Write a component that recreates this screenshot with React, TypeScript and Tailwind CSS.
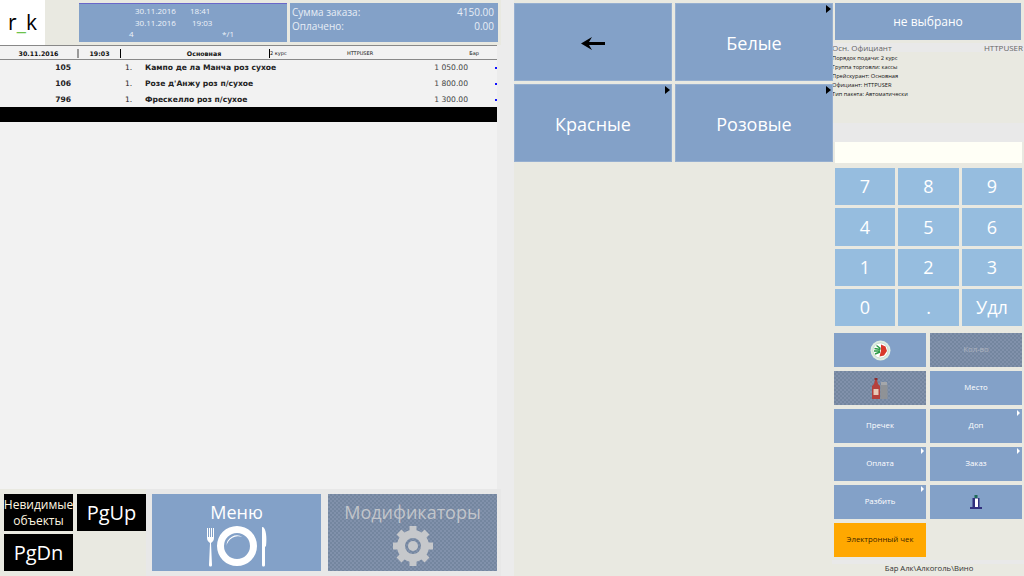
import type { ReactNode } from "react";

const SANS = "font-['Open_Sans','Noto_Sans',sans-serif]";
const TAHOMA = "font-['DejaVu_Sans',sans-serif]";
const CHECKER =
  "bg-[#7a8ca8] bg-[repeating-conic-gradient(#74869f_0_25%,#8191ab_0_50%)] bg-[length:4px_4px]";

const ORDER_ROWS = [
  { code: "105", qty: "1.", name: "Кампо де ла Манча роз сухое", price: "1 050.00" },
  { code: "106", qty: "1.", name: "Розе д'Анжу роз п/сухое", price: "1 800.00" },
  { code: "796", qty: "1.", name: "Фрескелло роз п/сухое", price: "1 300.00" },
];

const INFO_LINES = [
  "Порядок подачи: 2 курс",
  "Группа торговли: кассы",
  "Прейскурант: Основная",
  "Официант: HTTPUSER",
  "Тип пакета: Автоматически",
];

const KEYS = ["7", "8", "9", "4", "5", "6", "1", "2", "3", "0", ".", "Удл"];

function CategoryButton({ children, arrow }: { children: ReactNode; arrow?: boolean }) {
  return (
    <div className="relative flex items-center justify-center border border-[#96afd0] bg-[#83a1c8] pt-[2px] text-[18px] text-white">
      {children}
      {arrow && (
        <span className="absolute top-[1px] right-[1px] h-0 w-0 border-y-[4px] border-l-[5px] border-y-transparent border-l-black" />
      )}
    </div>
  );
}

function ActionButton({ children, arrow, className }: { children?: ReactNode; arrow?: boolean; className?: string }) {
  return (
    <div
      className={`relative flex items-center justify-center text-[7.8px] ${
        className ?? "bg-[#83a1c8] text-white"
      }`}
    >
      {children}
      {arrow && (
        <span className="absolute top-[1px] right-[2px] h-0 w-0 border-y-[3px] border-l-[3px] border-y-transparent border-l-white" />
      )}
    </div>
  );
}

function PlateIcon() {
  return (
    <svg width="62" height="42" viewBox="0 0 62 42" fill="white">
      <path d="M1 3v10c0 3 2 4 3 5l-1 22c0 2 3 2 3 0L5 18c1-1 3-2 3-5V3H7v9H6V3H5v9H4V3H3v9H2V3z" />
      <path d="M31 1a20 20 0 1 0 0 40a20 20 0 0 0 0-40zm0 7a13 13 0 1 1 0 26a13 13 0 0 1 0-26z" fillRule="evenodd" />
      <path d="M20.5 21a10.5 10.5 0 0 1 16-9 12 12 0 0 0-16 9z" />
      <path d="M57 2c3 2 4 10 3 19l-1 1v18c0 2-3 2-3 0V3c0-1 0-1 1-1z" />
    </svg>
  );
}

function GearIcon() {
  return (
    <svg width="42" height="42" viewBox="0 0 42 42">
      <circle cx="21" cy="21" r="12" fill="none" stroke="#c6c8cb" strokeWidth="8" />
      <circle cx="21" cy="21" r="5" fill="#c6c8cb" />
      <g stroke="#c6c8cb" strokeWidth="7">
        <path d="M21 1v8M21 33v8M1 21h8M33 21h8M7 7l5.5 5.5M29.5 29.5L35 35M35 7l-5.5 5.5M12.5 29.5L7 35" />
      </g>
    </svg>
  );
}

function DishIcon() {
  return (
    <svg width="21" height="21" viewBox="0 0 21 21">
      <circle cx="10.5" cy="10.5" r="10" fill="#dfeee2" />
      <circle cx="10.5" cy="10.5" r="7.6" fill="#ffffff" stroke="#aec7b5" strokeWidth="0.6" />
      <path d="M11 4.5l4.5 2 1.5 4.5-3 4.5-4.5 1 1.5-6z" fill="#d8382a" />
      <path d="M4.5 8.5l6 1M4 11h6M5 14l5-2M6.5 5.5l4 3" stroke="#2b9a45" strokeWidth="1.5" />
    </svg>
  );
}

function SauceIcon() {
  return (
    <svg width="16" height="21" viewBox="0 0 16 21">
      <rect x="2.5" y="0" width="3" height="2" fill="#8e2b2b" />
      <path d="M3 2h2l1 4 2 2v13H0V8l2-2z" fill="#b5403c" />
      <rect x="1.5" y="11" width="5" height="6" fill="#e8c9b8" />
      <rect x="9" y="4" width="6" height="3" fill="#a5a7aa" />
      <rect x="8.5" y="7" width="7" height="14" fill="#8f9296" />
    </svg>
  );
}

function BottleIcon() {
  return (
    <svg width="12" height="14" viewBox="0 0 12 14">
      <rect x="4.5" y="0" width="3" height="3" fill="#1f6a5a" />
      <rect x="2.5" y="3" width="7" height="9" fill="#30307e" />
      <rect x="5" y="3.5" width="3" height="9" fill="#ffffff" />
      <rect x="0" y="12" width="12" height="2" fill="#30307e" />
    </svg>
  );
}

function ArrowLeft() {
  return (
    <svg width="24" height="13" viewBox="0 0 24 13">
      <path d="M0 6.5L11 0 8 5h16v3H8l3 5z" fill="black" />
    </svg>
  );
}

export default function App() {
  return (
    <div className={`flex h-[576px] w-[1024px] overflow-hidden bg-[#e9e9e1] ${SANS}`}>
      {/* order side */}
      <div className="flex w-[501px] shrink-0 flex-col">
        <header className="flex h-[45px] shrink-0">
          <div className="flex h-[45px] w-[45px] items-center justify-center bg-white text-[21px] text-black">
            r<span className="text-[#6cc24a]">_</span>k
          </div>
          <div className="ml-[34px] mt-[3px] flex h-[39px] w-[208px] flex-col border-t border-[#6a67c9] bg-[#83a1c8] pl-[56px] pt-[1px] text-[8px] leading-[11.5px] text-[#eef3f9]">
            <div className="flex">
              <span className="w-[55px]">30.11.2016</span>
              <span>18:41</span>
            </div>
            <div className="flex">
              <span className="w-[57px]">30.11.2016</span>
              <span>19:03</span>
            </div>
            <div className="-ml-[6px] flex w-[105px] justify-between">
              <span>4</span>
              <span>*/1</span>
            </div>
          </div>
          <div className="ml-[3px] mt-[3px] h-[39px] w-[208px] bg-[#83a1c8] py-[2px] pl-[2px] pr-[4px] text-[10px] leading-[14px] text-[#e8eef6]">
            <div className="flex justify-between">
              <span>Сумма заказа:</span>
              <span>4150.00</span>
            </div>
            <div className="flex justify-between">
              <span>Оплачено:</span>
              <span>0.00</span>
            </div>
          </div>
        </header>

        <div className="flex min-h-0 flex-1 bg-[#ececec]">
          <div className="flex w-[497px] flex-col bg-[#f2f2f2]">
            <div className={`flex h-[15px] shrink-0 items-center border-y border-[#888] pt-[2px] text-[6.3px] font-bold text-[#111] ${TAHOMA}`}>
              <div className="w-[79px] border-r-2 border-[#999] text-center">30.11.2016</div>
              <div className="w-[42px] border-r border-black text-center">19:03</div>
              <div className="w-[149px] border-r border-black pl-[18px] text-center">Основная</div>
              <div className="flex flex-1 justify-between pr-[18px] text-[5px] font-normal">
                <span>2 курс</span>
                <span className="mr-[36px]">HTTPUSER</span>
                <span>Бар</span>
              </div>
            </div>
            {ORDER_ROWS.map((row) => (
              <div key={row.code} className={`flex h-[16px] shrink-0 items-center text-[7.6px] leading-[14px] text-[#222] ${TAHOMA}`}>
                <div className="w-[71px] text-right font-bold">{row.code}</div>
                <div className="ml-[54px] w-[20px]">{row.qty}</div>
                <div className="w-[277px] whitespace-nowrap font-bold">{row.name}</div>
                <div className="w-[46px] text-right text-[#444]">{row.price}</div>
                <div className="ml-[27px] h-[2px] w-[2px] bg-[#1010ff]" />
              </div>
            ))}
            <div className="-mt-px h-[15px] shrink-0 bg-black" />
          </div>
        </div>

        <div className="flex h-[87px] shrink-0 gap-[6px] bg-[#e8e8e8]">
          <div className="grid w-[146px] grid-cols-[69px_69px] grid-rows-[37px_37px] gap-x-[4px] gap-y-[3px] bg-[#e9e9e1] pl-[4px] pt-[5px] text-white">
            <div className="flex flex-col items-center justify-center bg-black text-[12px] leading-[16px] text-[#fff6e0]">
              <span>Невидимые</span>
              <span>объекты</span>
            </div>
            <div className="flex items-center justify-center bg-black text-[20px]">PgUp</div>
            <div className="flex items-center justify-center bg-black text-[20px]">PgDn</div>
          </div>
          <div className="mt-[5px] flex h-[77px] w-[169px] flex-col items-center bg-[#83a1c8] pt-[5px] text-[18px] leading-[26px] text-white">
            Меню
            <PlateIcon />
          </div>
          <div className={`ml-[1px] mt-[5px] flex h-[77px] w-[169px] flex-col items-center pt-[5px] text-[18px] leading-[26px] text-[#c2c5ca] ${CHECKER}`}>
            Модификаторы
            <GearIcon />
          </div>
        </div>
      </div>

      {/* categories */}
      <div className="w-[13px] shrink-0 bg-[#ececec]" />
      <div className="grid h-[165px] w-[319px] shrink-0 grid-cols-[158px_158px] grid-rows-[78px_78px] gap-[3px] pt-[3px]">
        <CategoryButton>
          <ArrowLeft />
        </CategoryButton>
        <CategoryButton arrow>Белые</CategoryButton>
        <CategoryButton arrow>Красные</CategoryButton>
        <CategoryButton arrow>Розовые</CategoryButton>
      </div>

      {/* right side */}
      <div className="-ml-[1px] flex w-[192px] shrink-0 flex-col">
        <div className="ml-[3px] mt-[3px] flex h-[37px] w-[186px] shrink-0 items-center justify-center bg-[#83a1c8] text-[12px] text-white">
          не выбрано
        </div>
        <div className="mt-[3px] flex h-[9px] items-center justify-between bg-[#e9e9e9] pr-[1px] text-[8px] text-[#666]">
          <span>Осн. Официант</span>
          <span>HTTPUSER</span>
        </div>
        <div className="flex h-[71px] flex-col bg-[#e9e9e1] pt-[2px] text-[5.7px] leading-[9px] text-[#111]">
          {INFO_LINES.map((line) => (
            <div key={line}>{line}</div>
          ))}
        </div>
        <div className="h-[19px] bg-[#e9e9e9]" />
        <div className="ml-[3px] h-[21px] w-[187px] shrink-0 bg-[#fffff6]" />

        <div className="ml-[3px] mt-[5px] grid w-[187px] grid-cols-[60px_61px_60px] grid-rows-[37px_38px_37px_37px] gap-[3px] text-[18px] text-white">
          {KEYS.map((key) => (
            <div key={key} className="flex items-center justify-center bg-[#96bddf]">
              {key}
            </div>
          ))}
        </div>

        <div className="ml-[2px] mt-[7px] grid w-[188px] grid-cols-[92px_92px] grid-rows-[34px_34px_34px_34px_34px_34px] gap-[4px]">
          <ActionButton>
            <DishIcon />
          </ActionButton>
          <ActionButton className={`text-[#b0b5bf] ${CHECKER}`}>Кол-во</ActionButton>
          <ActionButton className={CHECKER}>
            <SauceIcon />
          </ActionButton>
          <ActionButton>Место</ActionButton>
          <ActionButton>Пречек</ActionButton>
          <ActionButton arrow>Доп</ActionButton>
          <ActionButton arrow>Оплата</ActionButton>
          <ActionButton arrow>Заказ</ActionButton>
          <ActionButton arrow>Разбить</ActionButton>
          <ActionButton>
            <BottleIcon />
          </ActionButton>
          <ActionButton className="bg-[#ffa800] text-[#3a2400]">Электронный чек</ActionButton>
        </div>
        <div className="mt-[3px] h-[4px] shrink-0 bg-[#e9e9e9]" />
        <div className="pl-[2px] text-center text-[7.7px] leading-[8px] text-[#333]">Бар Алк\Алкоголь\Вино</div>
      </div>
    </div>
  );
}
